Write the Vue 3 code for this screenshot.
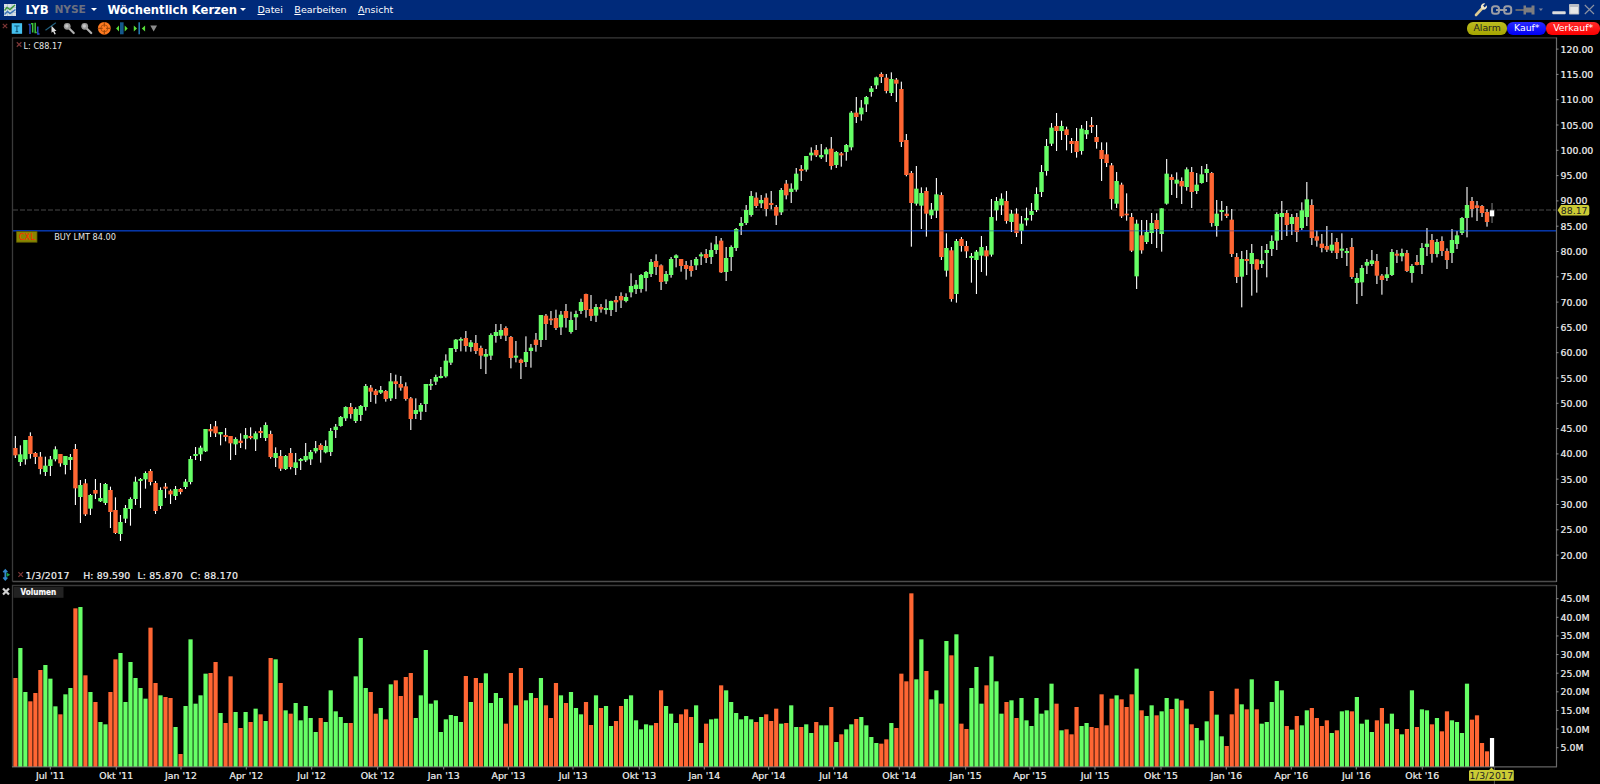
<template>
  <div class="chart-window">
    <header class="title-bar">
      <svg class="app-icon" width="12" height="12" viewBox="0 0 12 12">
        <rect width="12" height="12" fill="#d5dfe6" />
        <path d="M0 3.5H12M0 8.5H12M3.5 0V12M8 0V12" stroke="#9fb3c4" stroke-width=".6" />
        <path d="M.5 6.5L3 3.5L6 5.5L11 1" fill="none" stroke="#3c9a3c" stroke-width="1.5" />
        <path d="M.5 10.5L3.5 7.5L6 9.5L11.5 5.5" fill="none" stroke="#3873b8" stroke-width="1.4" />
      </svg>
      <span class="symbol">LYB</span>
      <span class="exchange">NYSE</span>
      <i class="caret"></i>
      <span class="period">Wöchentlich Kerzen</span>
      <i class="caret caret-period"></i>
      <nav class="menu">
        <span v-for="m in menu" :key="m"><u>{{ m[0] }}</u>{{ m.slice(1) }}</span>
      </nav>
      <svg class="window-icons" width="122" height="16" viewBox="1474 2 122 16">
        <path d="M1476 15L1483 7.5" stroke="#dccb93" stroke-width="2.6" stroke-linecap="round" />
        <path d="M1485.3 3.6L1483 5.8L1484.6 7.4L1486.8 5.2A3.2 3.2 0 0 1 1482.3 9.2A3.2 3.2 0 0 1 1485.3 3.6Z" fill="#f0e6c8" />
        <g fill="none" stroke="#9a9ca4" stroke-width="2">
          <rect x="1492" y="6.2" width="7" height="7.6" rx="2.6" />
          <rect x="1504.2" y="6.2" width="7" height="7.6" rx="2.6" />
          <path d="M1496 10H1507" />
        </g>
        <path d="M1515.5 10H1524" stroke="#6d6d70" stroke-width="1.8" />
        <path d="M1523.5 5.5H1526V7.5H1531.5V5.5H1534.5V14.5H1531.5V12.5H1526V14.5H1523.5Z" fill="#7d7d80" />
        <path d="M1538.8 8.5H1543L1540.9 11Z" fill="#77809a" />
        <rect x="1552.3" y="11.2" width="13.4" height="3" rx=".8" fill="#dcdcdc" />
        <rect x="1569" y="4" width="10.2" height="10.6" rx=".8" fill="#b9bcc4" />
        <rect x="1570.2" y="7" width="7.8" height="6.6" fill="#e6e6e6" />
        <path d="M1584.8 5L1594 14M1594 5L1584.8 14" stroke="#8d93a3" stroke-width="1.1" />
      </svg>
    </header>

    <div class="tool-bar">
      <svg class="tools" width="160" height="17" viewBox="0 20 160 17">
        <path d="M2.8 23.8L7.2 28.2M7.2 23.8L2.8 28.2" stroke="#7c3535" stroke-width="1.2" />
        <rect x="11.7" y="23.2" width="10.4" height="10.6" fill="#45c0ee" />
        <path d="M14.3 26H19.5M16.9 26V31.6M15.6 31.6H18.2" stroke="#0e5878" stroke-width="1.1" />
        <path d="M28.5 24.5H30V34M39.5 34H37.8V26.5" fill="none" stroke="#2d50d0" stroke-width="1.4" />
        <path d="M31 23.8H32.7V32.5M36.8 32.5H35.2V22.8" fill="none" stroke="#3cc23c" stroke-width="1.5" />
        <path d="M45.5 30.3L55.8 22.8" stroke="#206080" stroke-width="1.2" />
        <path d="M51.5 25.8V32.8L53.1 31.4L54.5 34.5L55.8 33.9L54.4 30.9H56.5Z" fill="#dedede" />
        <g v-for="x in [67.2, 84.7]" :key="x">
          <path :d="`M${x + 1.5} 28L${x + 6.5} 33`" stroke="#b0b0b0" stroke-width="2.2" stroke-linecap="round" />
          <circle :cx="x" cy="26.3" r="3.4" fill="#999" />
          <circle :cx="x - .4" cy="26" r="1.7" fill="#c8c8c8" />
        </g>
        <circle cx="104.3" cy="28.3" r="6.4" fill="#ff7a20" />
        <circle cx="104.3" cy="28.3" r="3.5" fill="none" stroke="#a04a08" stroke-width=".8" />
        <path d="M104.3 22V26.7M104.3 30V34.6M98 28.3H102.7M106 28.3H110.6" stroke="#8a3c04" stroke-width=".9" />
        <rect x="120" y="22.3" width="3.6" height="12" fill="#15598c" />
        <path d="M119 25.4V31.4L116.1 28.4ZM124.7 25.4V31.4L127.7 28.4Z" fill="#58df38" />
        <rect x="138.4" y="22.3" width="1.6" height="12" fill="#2376ad" />
        <path d="M133.8 25.4V31.4L137 28.4ZM145.1 25.4V31.4L141.8 28.4Z" fill="#58df38" />
        <path d="M150.3 25.6H157L153.7 31.5Z" fill="#8c8c8c" />
      </svg>
      <div class="orders">
        <button class="alarm">Alarm</button>
        <button class="buy">Kauf*</button>
        <button class="sell">Verkauf*</button>
      </div>
    </div>

    <svg class="price-pane" width="1600" height="546" viewBox="0 37 1600 546">
      <line x1="13" x2="1556" y1="210" y2="210" class="last-line" />
      <line x1="13" x2="1556" y1="230.8" y2="230.8" class="order-line" />
      <g v-for="c in candles" :key="c.x">
        <rect :x="c.x - .55" :y="c.high" width="1.1" :height="c.low - c.high" :fill="c.live ? '#777' : '#fff'" />
        <rect :x="c.x - 2.2" :y="c.top" width="4.4" :height="c.size" :fill="c.color" />
      </g>
      <line x1="13" x2="1556" y1="230.8" y2="230.8" class="order-line faint" />

      <path d="M12.5 581.5V37.8H1556.5" class="frame" />
      <path d="M12.5 581.5H1556.5" class="frame light" />
      <path d="M1556.5 37.5V582" class="axis" />
      <g v-for="p in prices" :key="p">
        <path :d="`M1556 ${priceY(p)}H1558.5`" class="tick" />
        <text x="1560.6" :y="priceY(p) + 3.5" class="label">{{ p.toFixed(2) }}</text>
      </g>
      <path d="M1557.6 210.3L1561 205H1587.5Q1589.3 205 1589.3 207V213.6Q1589.3 215.6 1587.5 215.6H1561Z" fill="#cbcb35" />
      <text x="1560.8" y="213.7" class="label tag">88.17</text>

      <path d="M16.8 42.3L21.4 46.8M21.4 42.3L16.8 46.8" class="remove" />
      <text x="23.6" y="48.8" class="small" textLength="38.6" lengthAdjust="spacingAndGlyphs">L: C88.17</text>
      <rect x="16.6" y="231.6" width="20.4" height="10.6" fill="#8a8600" stroke="#5c5a00" stroke-width=".8" />
      <text x="18.8" y="240.2" class="small cancel" textLength="16" lengthAdjust="spacingAndGlyphs">CXL</text>
      <text x="54.2" y="240.2" class="small" textLength="61.8" lengthAdjust="spacingAndGlyphs">BUY LMT 84.00</text>

      <path d="M18.4 572.2L23 576.8M23 572.2L18.4 576.8" class="remove" />
      <text x="25.6" y="578.6" class="label" textLength="43.8">1/3/2017</text>
      <text x="83.2" y="578.6" class="label" textLength="47">H: 89.590</text>
      <text x="137.4" y="578.6" class="label" textLength="45.4">L: 85.870</text>
      <text x="190.6" y="578.6" class="label" textLength="47.4">C: 88.170</text>
      <path d="M5.3 570.5V579.3M3.3 572.3L5.3 570L7.3 572.3M3.3 577.5L5.3 579.8L7.3 577.5" fill="none" stroke="#3289cc" stroke-width="1.7" />
      <path d="M6.5 572.6V577L10.2 574.8Z" fill="#1fa04a" />
    </svg>

    <svg class="volume-pane" width="1600" height="201" viewBox="0 583 1600 201">
      <rect v-for="v in volumes" :key="v.x" :x="v.x - 2.1" :y="v.y" width="4.2" :height="767 - v.y" :fill="v.color" />
      <path d="M12.5 767V585.5H1556.5" class="frame" />
      <path d="M12 766.8H1556.5" class="base" />
      <path d="M1556.5 585V767.3" class="axis" />
      <rect x="13.5" y="587" width="50" height="10.8" fill="#222" />
      <text x="20.6" y="595.4" class="label tab" textLength="35.6" lengthAdjust="spacingAndGlyphs">Volumen</text>
      <path d="M3 588.4L9 594.6M9 588.4L3 594.6" stroke="#d0d0d0" stroke-width="2.2" />
      <g v-for="n in 9" :key="n">
        <path :d="`M1556 ${volumeY(n * 5)}H1558.5`" class="tick" />
        <text x="1560.6" :y="volumeY(n * 5) + 3.5" class="label">{{ (n * 5).toFixed(1) }}M</text>
      </g>
      <g v-for="d in dates" :key="d.text">
        <path :d="`M${d.x} 767V769.5`" class="tick" />
        <text :x="d.x" y="778.9" class="label date">{{ d.text }}</text>
      </g>
      <path d="M1494.4 767V784" stroke="#666" stroke-width=".8" />
      <path d="M1470 770H1489L1491.5 767.6L1494 770H1512.6Q1513.8 770 1513.8 771.2V780.8H1469V771Z" fill="#cbcb35" />
      <text x="1491.4" y="778.9" class="label tag date" textLength="43.6">1/3/2017</text>
    </svg>
  </div>
</template>

<script setup>
const menu = ['Datei', 'Bearbeiten', 'Ansicht']

const FIRST_X = 15.35
const WEEK = 5.0057

// direction, then high, body top, body bottom and low; y values in thirds of a pixel below `from`
const series = [
  {
    from: 1200,
    bars: `r 108 144 166 174,g 136 163 186 198,g 120 120 178 194,r 97 108 162 176,r 156 159 171 192,
r 156 170 207 223,g 170 197 216 228,g 168 178 198 228,g 139 148 178 184,r 162 162 190 200,
g 168 168 195 223,g 162 171 180 210,r 132 147 265 315,g 240 255 291 369,r 237 250 343 348,
g 282 285 326 345,r 237 270 281 297,g 249 294 304 306,g 249 252 309 315,r 260 270 336 384,
r 292 330 399 402,g 345 366 402 423,g 315 324 356 369,g 292 297 327 377,g 230 245 297 315,
g 234 237 243 324,g 214 219 238 266,r 207 213 246 256,r 243 249 333 342,g 262 270 318 327,
r 249 260 266 294,r 268 272 283 312,g 258 267 288 300,r 264 267 276 283,g 237 245 261 267,
g 168 177 246 253,g 141 162 168 180,g 137 143 163 183,g 87 87 154 156,r 72 87 94 111,
r 63 79 100 111,g 96 96 103 136,r 84 105 111 124,r 108 108 130 180,g 112 117 133 165,
r 100 122 129 144,g 84 105 116 148,r 82 108 114 118,g 94 100 118 153,r 82 93 99 114,
g 67 75 114 123,r 92 102 171 176,g 142 159 174 201,r 150 168 206 213,g 165 168 207 210,
r 144 159 201 208,g 159 187 204 225,g 174 177 183 210,g 129 168 181 186,g 150 156 178 195,
g 123 144 154 160,r 130 135 150 188,g 121 138 157 160`
  },
  {
    from: 930,
    bars: `g 354 363 426 438,g 342 350 360 384,g 318 321 348 350,g 289 291 325 333,r 279 291 312 326,
g 292 297 333 339,g 285 288 315 333,g 222 228 291 302,r 225 233 245 276,r 237 242 255 281,
g 228 240 248 252,r 240 243 267 275,g 189 214 265 273,r 194 214 222 267,r 198 222 233 242,
r 217 229 267 272,r 261 265 327 360,g 265 300 312 327,g 279 285 305 330,g 222 222 282 306,
g 207 222 227 240,g 194 201 215 225,g 171 198 204 205,g 133 152 199 203,g 114 114 158 165,
g 87 89 117 126,g 82 87 92 124,r 63 84 108 125,g 90 97 111 125,r 75 99 123 132,
r 107 114 137 177,g 117 132 140 192,g 70 75 137 150,g 42 66 78 98,g 42 60 77 87,
r 49 54 77 93,r 78 81 144 175,g 93 137 143 157,r 146 149 159 207,g 79 126 156 171,
g 102 113 123 173,r 69 89 105 125,g 15 15 90 111,r 12 17 42 90,r 3 26 31 45,
r -1 24 54 60,g 3 14 52 75,r -18 3 24 53,g 5 30 66 71,g 2 12 22 60,
g -34 -24 3 12,r -49 -48 0 23,r -45 -3 18 33,g -18 -9 17 36`
  },
  {
    from: 180,
    bars: `r 732 741 748 758,g 718 744 750 763,g 722 723 750 768,r 708 720 727 756,r 697 708 721 744,
g 700 711 723 727,g 640 678 697 712,g 660 674 687 702,g 642 645 687 698,g 633 636 654 694,
g 597 606 642 651,r 583 603 621 645,r 613 616 666 690,g 633 642 664 672,g 591 597 645 653,
g 583 586 594 622,r 597 597 618 635,r 603 615 627 659,r 600 618 633 650,g 591 597 616 630,
g 577 583 589 615,r 567 582 594 609,g 548 570 591 612,g 528 553 570 582,r 534 542 637 639,
g 561 594 636 663,g 556 561 591 633,g 504 507 564 573,g 471 489 498 525,g 435 450 489 495,
g 393 408 465 470,r 397 413 438 444,g 405 420 430 444,r 400 413 447 469,r 393 429 435 448,
r 435 441 467 495,g 384 390 457 465,r 360 371 406 418,g 370 386 396 429,g 324 341 389 395,
r 315 327 333 363,g 288 288 329 335,g 262 278 286 302,r 255 270 286 291,g 252 285 292 297,
g 262 268 283 306,r 231 266 318 329,g 273 276 315 324,r 276 280 286 320,g 252 255 276 302,
g 153 158 262 271,r 111 158 171 189,g 120 143 163 182,g 108 111 133 156,g 78 85 96 110,
g 50 52 76 87,r 37 42 51 69,r 42 53 93 100,g 37 57 99 108,r 54 59 71 126,
r 65 87 246 261,r 222 240 345 349,r 333 339 429 560,g 318 386 431 437,g 382 399 437 507,
r 382 393 461 530,g 429 449 466 477,g 354 403 452 474,r 397 405 591 600,g 520 564 632 650,
r 561 571 717 725,g 537 543 702 728,r 531 537 558 575,r 543 558 574 594,g 579 588 594 668,
g 570 575 600 702,g 528 561 587 636,r 558 571 589 647,g 417 471 584 590,g 411 423 451 482,
g 400 416 436 465,r 393 423 483 491,g 450 461 486 516,r 445 461 519 531,g 468 491 513 552,
g 443 474 481 497,g 429 453 465 482,g 382 402 450 456,g 315 336 396 411,g 237 258 333 347,
g 189 203 251 258,r 159 198 213 273,g 182 198 213 240,r 200 208 225 271,r 234 243 252 279,
r 204 243 276 293,g 195 206 273 284,g 183 210 223 237,r 171 195 201 219,r 195 231 246 266,
r 247 270 297 363,r 247 283 309 321,r 309 316 417 449,g 336 363 431 444,r 368 374 469 474,
r 400 461 466 482,r 459 471 572 576,g 479 491 649 687,r 480 526 571 581,g 480 516 546 552,
g 459 489 519 552,r 460 480 507 564,g 445 445 522 575,g 297 341 431 434,r 343 351 360 405,
g 337 359 371 414,r 352 363 379 432,g 322 328 381 392,r 321 336 396 444,g 339 374 393 402,
g 318 343 369 371,g 312 327 339 366,r 336 339 489 500,g 420 461 498 530,g 423 450 456 482,
r 438 461 468 474`
  },
  {
    from: 420,
    bars: `r 207 239 342 351,r 339 351 411 429,g 333 357 410 502,r 330 357 363 405,g 312 339 372 467,
r 358 358 389 458,g 318 361 372 384,g 312 330 339 412,g 286 303 327 348,g 217 222 302 330,
g 183 219 231 300,r 210 219 255 288,g 222 231 252 285,r 219 231 276 306,g 187 211 264 270,
g 126 178 231 258,r 178 195 294 315,r 272 289 302 320,r 282 311 324 337,r 258 318 329 336,
g 279 314 332 339,r 294 306 339 357,g 280 326 332 354,g 324 333 339 378,r 294 321 411 417,
g 399 414 429 492,g 375 384 427 468,g 357 366 377 402,g 330 361 372 378,r 342 363 407 432,
r 402 407 420 464,g 381 403 414 423,g 327 336 405 408,r 330 341 347 369,g 326 339 349 364,
r 330 339 393 396,g 372 378 399 428,r 345 366 375 376,g 309 324 375 402,g 264 311 321 348,
r 282 300 342 368,g 297 306 342 352,r 289 303 333 348,r 325 333 360 387,g 267 300 339 369,
g 273 286 312 327,g 231 234 279 285,g 141 195 234 292,r 171 183 207 232,r 183 196 204 243,
r 195 198 219 231,r 207 216 246 260,w 189 211 229 249`
  }
]

const colors = { g: '#66ff66', r: '#ff6633', w: '#ffffff' }

const candles = series
  .flatMap(s => s.bars.split(',').map(b => {
    const [dir, ...ys] = b.trim().split(' ')
    const [high, top, bottom, low] = ys.map(y => (Number(y) + s.from) / 3)
    return { dir, high, top, low, size: Math.max(bottom - top, 1.6) }
  }))
  .map((c, i) => ({ ...c, x: FIRST_X + WEEK * i, color: colors[c.dir], live: c.dir === 'w' }))

// bar tops, thirds of a pixel below y = 580
const volumeTops = `294 204 336 364 339 270 255 296 379 403 343 324 85 81 286 336 366 426 433 336 238 219 366 246
294 324 356 143 309 346 351 354 441 522 378 178 371 346 281 279 246 399 429 289 396 444 396 426 386 403 423 234
238 309 391 401 369 421 378 414 456 414 426 331 394 411 429 429 289 174 324 336 401 384 418 313 301 348 291 279
414 346 210 371 361 456 418 405 408 426 288 366 294 309 280 369 339 354 431 279 376 264 361 339 354 294 376 414
309 346 369 336 384 403 366 435 346 384 378 438 423 378 357 346 421 448 433 436 429 331 378 401 429 403 388 411
376 489 431 418 416 316 331 366 399 418 408 418 426 411 403 423 386 431 429 376 441 441 433 459 426 436 436 381
486 463 448 433 417 411 436 471 489 491 478 429 444 281 304 40 298 178 273 358 331 371 183 226 163 431 447 324
261 371 316 229 304 401 366 361 414 354 421 438 354 401 391 311 371 451 448 463 381 438 429 441 444 343 436 356
346 358 381 343 266 391 408 376 406 394 354 387 356 361 386 433 444 481 424 333 404 469 498 403 326 373 388 298
388 431 426 366 303 331 438 449 408 436 391 384 414 438 421 459 451 394 391 394 351 431 419 456 421 384 431 401
447 463 447 331 441 388 391 433 414 454 394 421 426 459 311 419 406 489 514 474`.split(/\s+/)

const volumes = volumeTops.map((t, i) => ({
  x: FIRST_X + WEEK * i,
  y: 580 + t / 3,
  color: candles[i] ? candles[i].color : colors.w
}))

const prices = Array.from({ length: 21 }, (_, i) => 120 - i * 5)
const priceY = p => 49.1 + (120 - p) * 5.06
const volumeY = v => 598.7 + (45 - v) * 3.725

const months = ['Jul', 'Okt', 'Jan', 'Apr']
const dates = [50.3, 116.3, 181, 246.3, 311.7, 377.7, 443.7, 508.3, 573, 639.3, 704.3, 768.7, 833.7, 899.3,
  965.7, 1030, 1095, 1161, 1226.3, 1291.3, 1356.3, 1422.3]
  .map((x, i) => ({ x, text: `${months[i % 4]} '${11 + Math.floor((i + 2) / 4)}` }))
</script>

<style>
body {
  background: #000;
  overflow: hidden;
}
</style>

<style scoped>
.chart-window {
  width: 1600px;
  height: 784px;
  display: flex;
  flex-direction: column;
  background: #000;
  color: #fff;
  font-family: "DejaVu Sans", Verdana, sans-serif;
}
.chart-window svg {
  display: block;
  flex: none;
}
.title-bar {
  height: 20px;
  flex: none;
  box-sizing: border-box;
  padding: 0 4px 1px;
  display: flex;
  align-items: center;
  background: #002a7a;
  white-space: nowrap;
}
.symbol {
  width: 24px;
  margin-left: 9.5px;
  font-size: 11.8px;
  font-weight: bold;
}
.exchange {
  width: 31px;
  margin-left: 5px;
  font-size: 10.7px;
  font-weight: bold;
  letter-spacing: -0.1px;
  color: #6b7080;
}
.caret {
  margin-left: 5px;
  border: 3.2px solid transparent;
  border-top: 3.4px solid #fff;
  border-bottom: 0;
}
.period {
  width: 128px;
  margin-left: 11px;
  font-size: 11.6px;
  font-weight: bold;
}
.caret-period {
  margin-left: 4px;
}
.menu {
  display: flex;
  gap: 11.5px;
  margin-left: 12px;
  font-size: 9.5px;
}
.menu u {
  text-underline-offset: 1px;
}
.window-icons {
  margin-left: auto;
}
.tool-bar {
  height: 17px;
  flex: none;
  display: flex;
  justify-content: space-between;
}
.orders {
  display: flex;
  padding-top: 2.3px;
}
.orders button {
  height: 12.4px;
  padding: 0;
  border: 0;
  border-radius: 6px;
  font: 9.3px "DejaVu Sans", Verdana, sans-serif;
  line-height: 12px;
  color: #fff;
}
.orders .alarm {
  width: 40.3px;
  background: linear-gradient(#bcbc20, #a4a400);
  color: #222;
}
.orders .buy {
  width: 39px;
  background: linear-gradient(#2a2aff, #0000f4);
}
.orders .sell {
  width: 53.7px;
  background: linear-gradient(#ff2a2a, #fa0000);
}
.label {
  font-size: 9.35px;
  fill: #f2f2f2;
  stroke: #f2f2f2;
  stroke-width: 0.2px;
}
.label.tag {
  fill: #222;
  stroke: none;
}
.label.tab {
  font-size: 8.8px;
  font-weight: bold;
  fill: #fff;
}
.date {
  text-anchor: middle;
}
.small {
  font-family: "DejaVu Sans Condensed", "DejaVu Sans", sans-serif;
  font-size: 9.4px;
  fill: #e6e6e6;
}
.small.cancel {
  fill: #ff2a00;
}
.last-line {
  stroke: #303030;
  stroke-width: 1.7;
  stroke-dasharray: 5 2;
}
.order-line {
  stroke: #0636a6;
  stroke-width: 1.5;
}
.order-line.faint {
  opacity: 0.3;
}
.frame {
  fill: none;
  stroke: #3a3a3a;
  stroke-width: 1.3;
}
.frame.light {
  stroke: #4c4c4c;
}
.axis {
  stroke: #6a6a6a;
  stroke-width: 1.2;
}
.tick {
  stroke: #8a8a8a;
  stroke-width: 1;
}
.base {
  stroke: #7c7c7c;
  stroke-width: 1.3;
  opacity: 0.8;
}
.remove {
  stroke: #7c3535;
  stroke-width: 1.2;
}
</style>
